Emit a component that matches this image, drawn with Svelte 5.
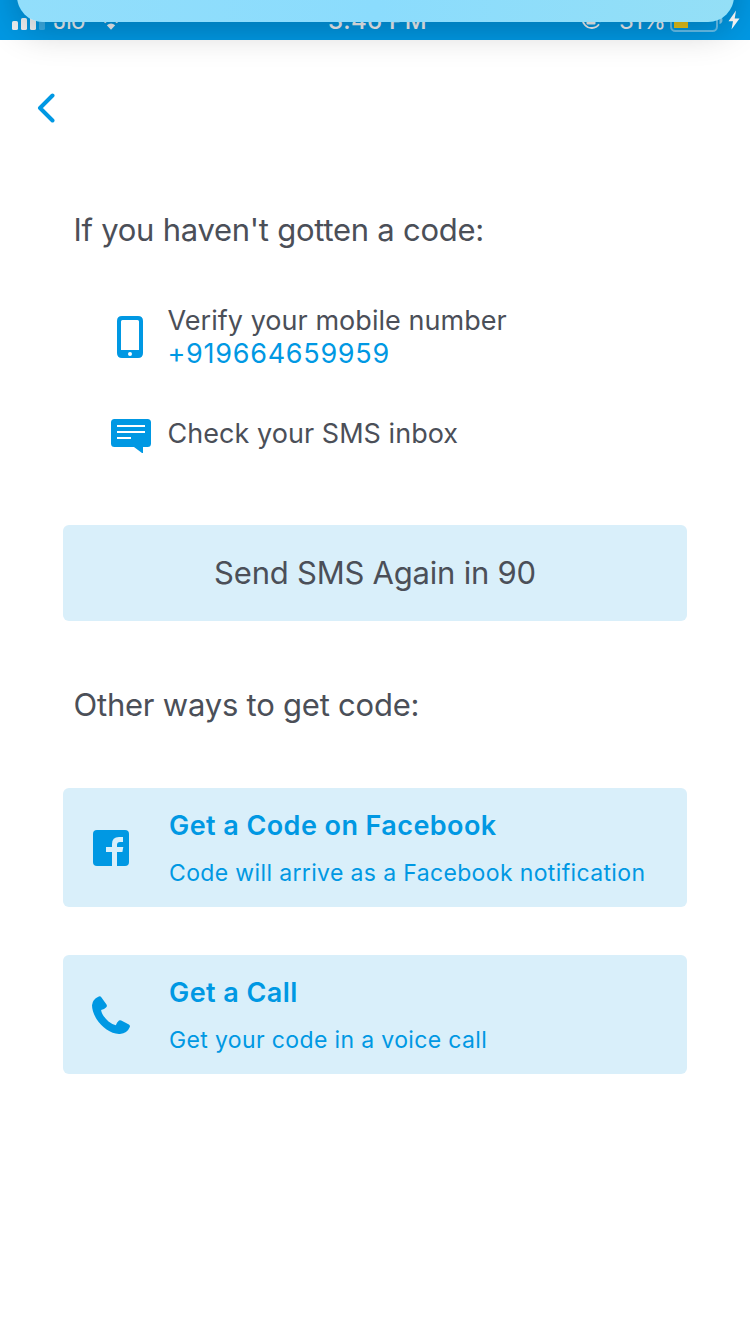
<script>
  const methods = [
    { id: 'facebook', title: 'Get a Code on Facebook', note: 'Code will arrive as a Facebook notification' },
    { id: 'call', title: 'Get a Call', note: 'Get your code in a voice call' }
  ];
  const seconds = 90;
</script>

<div class="screen">
  <header class="status">
    <div class="side">
      <svg class="signal" width="34" height="20" viewBox="0 0 34 20" fill="currentColor">
        <rect x="0" y="11" width="6" height="9" rx="1.6" />
        <rect x="9" y="8" width="6" height="12" rx="1.6" />
        <rect x="18" y="4" width="6" height="16" rx="1.6" />
        <rect x="27" y="0" width="6" height="20" rx="1.6" opacity=".25" />
      </svg>
      <span class="carrier">Jio</span>
      <svg class="wifi" width="24" height="18" viewBox="0 0 24 18" fill="none" stroke="currentColor">
        <path d="M1.5 6.2C7.5.6 16.500.6 22.500 6.200M5.200 10.200C9 6.500 15 6.500 18.800 10.200" stroke-width="2.600" />
        <path d="M7.800 13.300Q12 9.900 16.200 13.300L12 17.800Z" fill="currentColor" stroke="none" />
      </svg>
    </div>
    <span class="time">3:46 PM</span>
    <div class="side right">
      <svg class="lock" width="22" height="22" viewBox="0 0 22 22" fill="none" stroke="currentColor" stroke-width="1.8">
        <path d="M19.300 7.500A9 9 0 1 0 18 15.200" />
        <path d="M17 10.500h4l-2 3z" fill="currentColor" stroke="none" />
        <rect x="5.500" y="9" width="9" height="6.500" rx="1" fill="currentColor" stroke="none" />
        <path d="M7.300 10V7.800a2.700 2.700 0 0 1 5.400 0V10" />
      </svg>
      <span class="percent">31%</span>
      <svg class="battery" width="53" height="24" viewBox="0 0 53 24">
        <rect x="1" y="1" width="46" height="22" rx="4.500" fill="none" stroke="#fff" stroke-opacity=".4" stroke-width="2" />
        <rect x="4" y="4" width="14" height="16" fill="#e6c41c" />
        <path d="M49.500 8q3 1 3 4t-3 4z" fill="#fff" fill-opacity=".5" />
      </svg>
      <svg class="bolt" width="12" height="20" viewBox="0 0 12 20" fill="#fff"><path d="M8 .5L.5 11.200H5L3.500 19.500L11.500 8.500H6.700Z" /></svg>
    </div>
    <div class="banner"></div>
  </header>

  <nav>
    <svg width="19" height="30" viewBox="0 0 19 30" fill="none" stroke="#0098e3" stroke-width="4">
      <path d="M15.500 2.500L3 15L15.500 27.500" stroke-linejoin="round" stroke-linecap="round" />
    </svg>
  </nav>

  <main>
    <h2 class="first">If you haven't gotten a code:</h2>
    <div class="tip">
      <span class="tip-icon">
        <svg width="26" height="42" viewBox="0 0 26 42">
          <path fill="#0098e3" fill-rule="evenodd" d="M5 0H21Q26 0 26 5V37Q26 42 21 42H5Q0 42 0 37V5Q0 0 5 0ZM5.500 4Q4 4 4 5.500V34H22V5.500Q22 4 20.500 4Z" />
          <circle cx="13" cy="38" r="2" fill="#fff" />
        </svg>
      </span>
      <p>Verify your mobile number<br /><span class="phone">+919664659959</span></p>
    </div>
    <div class="tip inbox">
      <span class="tip-icon">
        <svg width="40" height="34" viewBox="0 0 40 34">
          <path fill="#0098e3" d="M3.500 0H36.500Q40 0 40 3.500V24.500Q40 28 36.500 28H32V34H31L23 28H3.500Q0 28 0 24.500V3.500Q0 0 3.500 0Z" />
          <path d="M6 7H34M6 13H34M6 19H20" stroke="#fff" stroke-width="2" />
        </svg>
      </span>
      <p>Check your SMS inbox</p>
    </div>

    <div class="resend"><span>Send SMS Again in {seconds}</span></div>

    <h2 class="other">Other ways to get code:</h2>

    <div class="methods">
      {#each methods as m}
        <div class="method {m.id}">
          <span class="method-icon">
            {#if m.id === 'facebook'}
              <svg width="36" height="36" viewBox="0 0 36 36">
                <rect width="36" height="36" rx="4" fill="#0098e3" />
                <path fill="#d9effa" d="M19 36V22H13V17H19V14Q19 7 26 7H30V12H27Q24 12 24 15V17H30.300L29.400 22H24V36Z" />
              </svg>
            {:else}
              <svg width="38" height="38" viewBox="0 0 38 38">
                <path fill="#0098e3" d="M6.300.7Q8.200-.4 9.300 1.200L14.500 8.600Q15.500 10.200 14 11.600Q12.500 13.400 9.100 14C9.500 17.500 12.500 22 16.500 25.500Q20.500 28.600 23.800 29.300Q25 26 27 24.500Q28.100 23.900 29.200 24.500L36.900 28.500Q38.300 29.300 37.800 31Q35.300 37.300 28 38C19.500 38.300 10 31.500 4.500 23C1.500 18 0 13 0 9.200Q.5 3.200 6.300.7Z" />
              </svg>
            {/if}
          </span>
          <div class="copy">
            <strong>{m.title}</strong>
            <span class="note">{m.note}</span>
          </div>
        </div>
      {/each}
    </div>
  </main>
</div>

<style>
  :global(body) { background: #fff; }
  .screen {
    width: 750px;
    height: 1334px;
    overflow: hidden;
    background: #fff;
    color: #4b4f58;
    font-family: Inter, sans-serif;
  }
  svg { display: block; flex: none; }
  .status {
    position: relative;
    height: 40px;
    padding: 0 10px 0 12px;
    display: grid;
    grid-template-columns: 316px 1fr auto;
    align-items: center;
    background: #0098e3;
    color: #f0f2f4;
    font-size: 24px;
    line-height: 42px;
  }
  .side { display: flex; align-items: center; height: 40px; }
  .signal { margin-right: 7px; }
  .carrier { width: 32px; margin-right: 14px; letter-spacing: -.8px; }
  .wifi { margin-top: 1px; }
  .time { font-weight: 500; letter-spacing: .3px; }
  .carrier, .time, .percent { height: 40px; }
  .lock { margin-right: 16px; }
  .percent { width: 47px; margin-right: 4px; letter-spacing: -.6px; }
  .battery { margin-right: 5px; }
  .banner {
    position: absolute;
    z-index: 1;
    left: 16.5px;
    top: -80px;
    width: 717px;
    height: 102px;
    border-radius: 26px;
    background: linear-gradient(90deg, #92defb, #8bdcfd 50%, #94dff6);
    box-shadow: 0 8px 36px rgba(0, 0, 0, .23);
  }
  nav { padding: 53px 0 0 37px; height: 157px; box-sizing: border-box; }
  main { padding: 0 63px; }
  h2 { margin: 0; padding-left: 10.500px; font-size: 31px; line-height: 40px; font-weight: 400; white-space: nowrap; letter-spacing: -.22px; }
  .first { margin-top: 13px; letter-spacing: -.26px; }
  .tip { display: flex; align-items: center; margin-top: 54px; }
  .tip-icon { width: 104.500px; padding-left: 48px; box-sizing: border-box; display: flex; }
  .tip:not(.inbox) .tip-icon { padding-left: 54px; }
  .tip p { margin: 0; font-size: 27px; line-height: 33px; white-space: nowrap; letter-spacing: .04px; }
  .phone { color: #0098e3; letter-spacing: .72px; }
  .inbox { margin-top: 49px; height: 34px; }
  .inbox p { padding-bottom: 6px; }
  .resend {
    margin-top: 72px;
    height: 96px;
    border-radius: 6px;
    background: #d9effa;
    display: flex;
    align-items: center;
    justify-content: center;
    font-size: 31px;
    letter-spacing: -.22px;
  }
  .resend span { line-height: 40px; }
  .other { margin-top: 64px; }
  .methods { margin-top: 63px; display: grid; gap: 48px; }
  .method {
    height: 119px;
    border-radius: 6px;
    background: #d9effa;
    color: #0098e3;
    display: flex;
    align-items: center;
  }
  .method-icon { width: 106px; padding-left: 30px; box-sizing: border-box; }
  .call .method-icon { padding-left: 29px; }
  .copy { display: grid; padding-top: 5px; white-space: nowrap; }
  strong { font-size: 27px; line-height: 46px; font-weight: 600; letter-spacing: .43px; }
  .note { font-size: 23px; line-height: 49px; letter-spacing: .36px; }
</style>
